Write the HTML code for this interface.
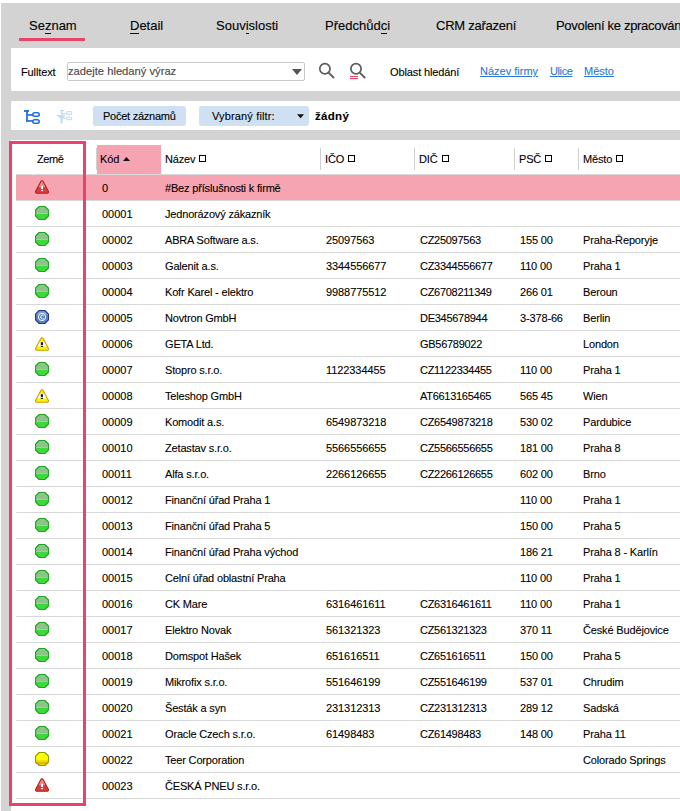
<!DOCTYPE html>
<html><head><meta charset="utf-8">
<style>
*{margin:0;padding:0;box-sizing:border-box}
html,body{width:680px;height:811px;overflow:hidden;background:#fff;font-family:"Liberation Sans",sans-serif;color:#111}
.abs{position:absolute}
#frame{position:absolute;left:1px;top:3px;width:679px;height:808px;background:#d3d3d3}
.tab{position:absolute;top:18px;font-size:13px;line-height:16px;color:#000;white-space:nowrap;-webkit-text-stroke:0.1px #000}
.tab u{text-decoration:none;border-bottom:1px solid #111}
#tabline{position:absolute;left:19px;top:38px;width:66px;height:3px;background:#e8436a}
.panel{position:absolute;left:11px;width:669px;background:#fff}
#p1{top:48px;height:43px}
#p2{top:101px;height:29px}
#p3{top:140px;height:671px}
.t11{font-size:11px;line-height:13px;white-space:nowrap;color:#000;-webkit-text-stroke:0.1px currentColor;letter-spacing:-0.12px}
#inp{position:absolute;left:67px;top:62px;width:238px;height:19px;border:1px solid #c8c8c8;border-radius:2px;background:#fff}
#inp span{position:absolute;left:0px;top:1px;color:#4a4a4a;-webkit-text-stroke:0.15px #4a4a4a;font-size:11.2px;line-height:14px}
.link{color:#2a7ad4;text-decoration:underline;letter-spacing:0}
.btn{position:absolute;top:106px;height:20px;background:#cfe0f3;border-radius:3px}
.hdr{position:absolute;top:145px;height:29px;font-size:11px;line-height:13px;color:#000;-webkit-text-stroke:0.1px #000;letter-spacing:-0.15px;white-space:nowrap}
.hsep{position:absolute;top:148px;width:1px;height:22px;background:#d0d0d0}
.sq{display:inline-block;width:7px;height:7px;border:1px solid #000;margin-left:4px;vertical-align:1px;-webkit-text-stroke:0}
#hline{position:absolute;left:16px;top:174px;width:664px;height:1px;background:#d8d8d8}
.row{position:absolute;left:16px;width:664px;height:25px;font-size:11px;line-height:25px;color:#000;-webkit-text-stroke:0.1px #000}
.row.hl{background:#f6a4b2}
.row .c{position:absolute;top:1px;white-space:nowrap}
.row .ic{position:absolute;left:19px;line-height:0}
.sep{position:absolute;left:16px;width:664px;height:1px;background:#d8d8d8}
#box{position:absolute;left:9px;top:141px;width:77px;height:665px;border:3px solid #e8436a}
</style></head><body>
<div id="frame"></div>
<div class="tab" style="left:29px">Se<u>z</u>nam</div>
<div class="tab" style="left:130px"><u>D</u>etail</div>
<div class="tab" style="left:216px">Souv<u>i</u>slosti</div>
<div class="tab" style="left:325px">Předchůd<u>c</u>i</div>
<div class="tab" style="left:436px;letter-spacing:-0.25px">CRM zařazení</div>
<div class="tab" style="left:556px;letter-spacing:-0.3px">Povolení ke zpracování</div>
<div id="tabline"></div>
<div class="panel" id="p1"></div>
<div class="panel" id="p2"></div>
<div class="panel" id="p3"></div>

<div class="abs t11" style="left:21px;top:66px">Fulltext</div>
<div id="inp"><span>zadejte hledaný výraz</span>
<svg class="abs" style="left:224px;top:6px" width="10" height="6" viewBox="0 0 10 6"><path d="M0,0 L10,0 L5,6 Z" fill="#555"/></svg></div>
<svg class="abs" style="left:314px;top:58px" width="24" height="24" viewBox="0 0 24 24"><circle cx="10.9" cy="10.8" r="5.1" fill="none" stroke="#5c5c5c" stroke-width="1.7"/><path d="M14.6,14.6 L20,20" stroke="#5c5c5c" stroke-width="1.9" stroke-linecap="butt"/></svg>
<svg class="abs" style="left:345px;top:58px" width="24" height="24" viewBox="0 0 24 24"><circle cx="11" cy="10.8" r="5.1" fill="none" stroke="#5c5c5c" stroke-width="1.7"/><path d="M14.7,14.6 L20.1,20" stroke="#5c5c5c" stroke-width="1.9"/><rect x="5" y="18" width="8" height="1.1" fill="#e8436a"/><rect x="5" y="20" width="8" height="1.1" fill="#e8436a"/></svg>
<div class="abs t11" style="left:390px;top:66px">Oblast hledání</div>
<div class="abs t11 link" style="left:480px;top:65px">Název firmy</div>
<div class="abs t11 link" style="left:550px;top:65px;letter-spacing:-0.4px">Ulice</div>
<div class="abs t11 link" style="left:584px;top:65px">Město</div>

<svg class="abs" style="left:20px;top:106px" width="24" height="22" viewBox="0 0 24 22"><g fill="#2272d6"><rect x="4" y="4" width="5" height="1.9"/><rect x="6.1" y="4" width="1.8" height="11.8"/><rect x="7" y="8.1" width="6" height="1.7"/><rect x="6.1" y="14.1" width="7" height="1.7"/></g><rect x="12.8" y="6.8" width="6.4" height="3.4" rx="1.7" fill="none" stroke="#2272d6" stroke-width="1.6"/><rect x="12.8" y="13.8" width="6.4" height="3.4" rx="1.7" fill="none" stroke="#2272d6" stroke-width="1.6"/></svg>
<svg class="abs" style="left:52px;top:106px" width="24" height="22" viewBox="0 0 24 22"><g fill="#c6dcf2"><rect x="8" y="4" width="4" height="1.2"/><rect x="9" y="4" width="1.6" height="5"/><rect x="10" y="7" width="4.5" height="1.2"/><polygon points="4,9 14,9 10.6,12.6 10.6,17.6 8.4,17.6 8.4,12.6"/><rect x="11" y="11.7" width="3.5" height="1.2"/></g><rect x="14.6" y="5.6" width="5.2" height="2.8" rx="1.4" fill="none" stroke="#c6dcf2" stroke-width="1.1"/><rect x="14.6" y="11" width="5.2" height="2.8" rx="1.4" fill="none" stroke="#c6dcf2" stroke-width="1.1"/></svg>
<div class="btn" style="left:93px;width:93px"></div>
<div class="abs t11" style="left:103px;top:110px;letter-spacing:-0.25px">Počet záznamů</div>
<div class="btn" style="left:199px;width:110px"></div>
<div class="abs t11" style="left:212px;top:110px;letter-spacing:0.15px">Vybraný filtr:</div>
<svg class="abs" style="left:297px;top:114px" width="7" height="5" viewBox="0 0 7 5"><path d="M0,0.3 L7,0.3 L3.5,4.3 Z" fill="#111"/></svg>
<div class="abs t11" style="left:315px;top:110px;font-weight:bold;font-size:11.5px;letter-spacing:0.3px;-webkit-text-stroke:0.1px #000">žádný</div>

<div class="hdr" style="left:37px;top:153px;letter-spacing:-0.4px">Země</div>
<div class="hsep" style="left:96px"></div>
<div class="abs" style="left:97px;top:145px;width:64px;height:29px;background:#f6a4b2"></div>
<div class="hdr" style="left:100px;top:153px">Kód<svg width="7" height="4" viewBox="0 0 7 4" style="vertical-align:2px;margin-left:4px"><path d="M0,4 L7,4 L3.5,0 Z" fill="#111"/></svg></div>
<div class="hdr" style="left:165px;top:153px">Název<span class="sq"></span></div>
<div class="hsep" style="left:320px"></div>
<div class="hdr" style="left:325px;top:153px">IČO<span class="sq"></span></div>
<div class="hsep" style="left:414px"></div>
<div class="hdr" style="left:419px;top:153px">DIČ<span class="sq"></span></div>
<div class="hsep" style="left:514px"></div>
<div class="hdr" style="left:519px;top:153px">PSČ<span class="sq"></span></div>
<div class="hsep" style="left:578px"></div>
<div class="hdr" style="left:583px;top:153px">Město<span class="sq"></span></div>
<div id="hline"></div>
<div class="abs" style="left:33px;top:174px;width:1px;height:1px;background:#fff"></div>
<div class="row hl" style="top:175px"><div class="ic" style="top:5px"><svg width="14" height="14" viewBox="0 0 14 14"><defs><clipPath id="rt"><path d="M7,0.8 C7.7,0.8 8.1,1.3 8.4,1.9 L13.3,11.2 C13.8,12.2 13.3,13.2 12.3,13.2 L1.7,13.2 C0.7,13.2 0.2,12.2 0.7,11.2 L5.6,1.9 C5.9,1.3 6.3,0.8 7,0.8 Z"/></clipPath></defs><g clip-path="url(#rt)"><rect x="0" y="0" width="14" height="7" fill="#e98a8a"/><rect x="0" y="7" width="14" height="7" fill="#dc3b3b"/><rect x="0" y="6.5" width="14" height="0.6" fill="#d98aa8"/></g><path d="M7,0.8 C7.7,0.8 8.1,1.3 8.4,1.9 L13.3,11.2 C13.8,12.2 13.3,13.2 12.3,13.2 L1.7,13.2 C0.7,13.2 0.2,12.2 0.7,11.2 L5.6,1.9 C5.9,1.3 6.3,0.8 7,0.8 Z" fill="none" stroke="#b42010" stroke-width="1.1"/><rect x="6" y="5.9" width="2" height="3.1" fill="#fff"/><rect x="6" y="10" width="2" height="1.1" fill="#fff"/></svg></div><span class="c" style="left:86px">0</span><span class="c" style="left:149px;letter-spacing:-0.17px">#Bez příslušnosti k firmě</span><span class="c" style="left:310px;letter-spacing:-0.08px"></span><span class="c" style="left:404px;letter-spacing:-0.28px"></span><span class="c" style="left:504px;letter-spacing:-0.15px"></span><span class="c" style="left:567px;letter-spacing:-0.15px"></span></div><div class="sep" style="top:200px"></div>
<div class="row" style="top:201px"><div class="ic" style="top:5px"><svg width="14" height="14" viewBox="0 0 14 14"><defs><clipPath id="oc"><polygon points="4,0 10,0 14,4 14,10 10,14 4,14 0,10 0,4"/></clipPath></defs><g clip-path="url(#oc)"><rect x="0" y="0" width="14" height="7" fill="#8cc48c"/><rect x="0" y="7" width="14" height="1" fill="#88e860"/><rect x="0" y="8" width="14" height="6" fill="#3cd83c"/></g><polygon points="4.2,0.5 9.8,0.5 13.5,4.2 13.5,9.8 9.8,13.5 4.2,13.5 0.5,9.8 0.5,4.2" fill="none" stroke="#1fa81f" stroke-width="1.2"/></svg></div><span class="c" style="left:86px">00001</span><span class="c" style="left:149px;letter-spacing:-0.17px">Jednorázový zákazník</span><span class="c" style="left:310px;letter-spacing:-0.08px"></span><span class="c" style="left:404px;letter-spacing:-0.28px"></span><span class="c" style="left:504px;letter-spacing:-0.15px"></span><span class="c" style="left:567px;letter-spacing:-0.15px"></span></div><div class="sep" style="top:226px"></div>
<div class="row" style="top:227px"><div class="ic" style="top:5px"><svg width="14" height="14" viewBox="0 0 14 14"><defs><clipPath id="oc"><polygon points="4,0 10,0 14,4 14,10 10,14 4,14 0,10 0,4"/></clipPath></defs><g clip-path="url(#oc)"><rect x="0" y="0" width="14" height="7" fill="#8cc48c"/><rect x="0" y="7" width="14" height="1" fill="#88e860"/><rect x="0" y="8" width="14" height="6" fill="#3cd83c"/></g><polygon points="4.2,0.5 9.8,0.5 13.5,4.2 13.5,9.8 9.8,13.5 4.2,13.5 0.5,9.8 0.5,4.2" fill="none" stroke="#1fa81f" stroke-width="1.2"/></svg></div><span class="c" style="left:86px">00002</span><span class="c" style="left:149px;letter-spacing:-0.17px">ABRA Software a.s.</span><span class="c" style="left:310px;letter-spacing:-0.08px">25097563</span><span class="c" style="left:404px;letter-spacing:-0.28px">CZ25097563</span><span class="c" style="left:504px;letter-spacing:-0.15px">155 00</span><span class="c" style="left:567px;letter-spacing:-0.15px">Praha-Řeporyje</span></div><div class="sep" style="top:252px"></div>
<div class="row" style="top:253px"><div class="ic" style="top:5px"><svg width="14" height="14" viewBox="0 0 14 14"><defs><clipPath id="oc"><polygon points="4,0 10,0 14,4 14,10 10,14 4,14 0,10 0,4"/></clipPath></defs><g clip-path="url(#oc)"><rect x="0" y="0" width="14" height="7" fill="#8cc48c"/><rect x="0" y="7" width="14" height="1" fill="#88e860"/><rect x="0" y="8" width="14" height="6" fill="#3cd83c"/></g><polygon points="4.2,0.5 9.8,0.5 13.5,4.2 13.5,9.8 9.8,13.5 4.2,13.5 0.5,9.8 0.5,4.2" fill="none" stroke="#1fa81f" stroke-width="1.2"/></svg></div><span class="c" style="left:86px">00003</span><span class="c" style="left:149px;letter-spacing:-0.17px">Galenit a.s.</span><span class="c" style="left:310px;letter-spacing:-0.08px">3344556677</span><span class="c" style="left:404px;letter-spacing:-0.28px">CZ3344556677</span><span class="c" style="left:504px;letter-spacing:-0.15px">110 00</span><span class="c" style="left:567px;letter-spacing:-0.15px">Praha 1</span></div><div class="sep" style="top:278px"></div>
<div class="row" style="top:279px"><div class="ic" style="top:5px"><svg width="14" height="14" viewBox="0 0 14 14"><defs><clipPath id="oc"><polygon points="4,0 10,0 14,4 14,10 10,14 4,14 0,10 0,4"/></clipPath></defs><g clip-path="url(#oc)"><rect x="0" y="0" width="14" height="7" fill="#8cc48c"/><rect x="0" y="7" width="14" height="1" fill="#88e860"/><rect x="0" y="8" width="14" height="6" fill="#3cd83c"/></g><polygon points="4.2,0.5 9.8,0.5 13.5,4.2 13.5,9.8 9.8,13.5 4.2,13.5 0.5,9.8 0.5,4.2" fill="none" stroke="#1fa81f" stroke-width="1.2"/></svg></div><span class="c" style="left:86px">00004</span><span class="c" style="left:149px;letter-spacing:-0.17px">Kofr Karel - elektro</span><span class="c" style="left:310px;letter-spacing:-0.08px">9988775512</span><span class="c" style="left:404px;letter-spacing:-0.28px">CZ6708211349</span><span class="c" style="left:504px;letter-spacing:-0.15px">266 01</span><span class="c" style="left:567px;letter-spacing:-0.15px">Beroun</span></div><div class="sep" style="top:304px"></div>
<div class="row" style="top:305px"><div class="ic" style="top:5px"><svg width="14" height="14" viewBox="0 0 14 14"><defs><clipPath id="bo"><polygon points="4,0 10,0 14,4 14,10 10,14 4,14 0,10 0,4"/></clipPath></defs><g clip-path="url(#bo)"><rect x="0" y="0" width="14" height="14" fill="#5b7fc6"/><rect x="0" y="1.5" width="14" height="3" fill="#8aa4d2"/></g><polygon points="4.2,0.5 9.8,0.5 13.5,4.2 13.5,9.8 9.8,13.5 4.2,13.5 0.5,9.8 0.5,4.2" fill="none" stroke="#1e3a8c" stroke-width="1.1"/><circle cx="7" cy="7" r="3.6" fill="#5b7fc6" stroke="#fff" stroke-width="1"/><path d="M8.6,5.7 A1.7,1.8 0 1 0 8.6,8.3" fill="none" stroke="#fff" stroke-width="1"/></svg></div><span class="c" style="left:86px">00005</span><span class="c" style="left:149px;letter-spacing:-0.17px">Novtron GmbH</span><span class="c" style="left:310px;letter-spacing:-0.08px"></span><span class="c" style="left:404px;letter-spacing:-0.28px">DE345678944</span><span class="c" style="left:504px;letter-spacing:-0.15px">3-378-66</span><span class="c" style="left:567px;letter-spacing:-0.15px">Berlin</span></div><div class="sep" style="top:330px"></div>
<div class="row" style="top:331px"><div class="ic" style="top:6px"><svg width="14" height="14" viewBox="0 0 14 14"><defs><clipPath id="yt"><path d="M7,0.8 C7.7,0.8 8.1,1.3 8.4,1.9 L13.3,11.2 C13.8,12.2 13.3,13.2 12.3,13.2 L1.7,13.2 C0.7,13.2 0.2,12.2 0.7,11.2 L5.6,1.9 C5.9,1.3 6.3,0.8 7,0.8 Z"/></clipPath></defs><g clip-path="url(#yt)"><rect x="0" y="0" width="14" height="14" fill="#ffee00"/><rect x="0" y="4.8" width="14" height="4.6" fill="#fffbe8"/></g><path d="M7,0.8 C7.7,0.8 8.1,1.3 8.4,1.9 L13.3,11.2 C13.8,12.2 13.3,13.2 12.3,13.2 L1.7,13.2 C0.7,13.2 0.2,12.2 0.7,11.2 L5.6,1.9 C5.9,1.3 6.3,0.8 7,0.8 Z" fill="none" stroke="#c9a200" stroke-width="1.1"/><rect x="5.8" y="5.2" width="2.2" height="2.8" fill="#1c2038"/><rect x="5.8" y="8.8" width="2.2" height="1.2" fill="#1c2038"/></svg></div><span class="c" style="left:86px">00006</span><span class="c" style="left:149px;letter-spacing:-0.17px">GETA Ltd.</span><span class="c" style="left:310px;letter-spacing:-0.08px"></span><span class="c" style="left:404px;letter-spacing:-0.28px">GB56789022</span><span class="c" style="left:504px;letter-spacing:-0.15px"></span><span class="c" style="left:567px;letter-spacing:-0.15px">London</span></div><div class="sep" style="top:356px"></div>
<div class="row" style="top:357px"><div class="ic" style="top:5px"><svg width="14" height="14" viewBox="0 0 14 14"><defs><clipPath id="oc"><polygon points="4,0 10,0 14,4 14,10 10,14 4,14 0,10 0,4"/></clipPath></defs><g clip-path="url(#oc)"><rect x="0" y="0" width="14" height="7" fill="#8cc48c"/><rect x="0" y="7" width="14" height="1" fill="#88e860"/><rect x="0" y="8" width="14" height="6" fill="#3cd83c"/></g><polygon points="4.2,0.5 9.8,0.5 13.5,4.2 13.5,9.8 9.8,13.5 4.2,13.5 0.5,9.8 0.5,4.2" fill="none" stroke="#1fa81f" stroke-width="1.2"/></svg></div><span class="c" style="left:86px">00007</span><span class="c" style="left:149px;letter-spacing:-0.17px">Stopro s.r.o.</span><span class="c" style="left:310px;letter-spacing:-0.08px">1122334455</span><span class="c" style="left:404px;letter-spacing:-0.28px">CZ1122334455</span><span class="c" style="left:504px;letter-spacing:-0.15px">110 00</span><span class="c" style="left:567px;letter-spacing:-0.15px">Praha 1</span></div><div class="sep" style="top:382px"></div>
<div class="row" style="top:383px"><div class="ic" style="top:6px"><svg width="14" height="14" viewBox="0 0 14 14"><defs><clipPath id="yt"><path d="M7,0.8 C7.7,0.8 8.1,1.3 8.4,1.9 L13.3,11.2 C13.8,12.2 13.3,13.2 12.3,13.2 L1.7,13.2 C0.7,13.2 0.2,12.2 0.7,11.2 L5.6,1.9 C5.9,1.3 6.3,0.8 7,0.8 Z"/></clipPath></defs><g clip-path="url(#yt)"><rect x="0" y="0" width="14" height="14" fill="#ffee00"/><rect x="0" y="4.8" width="14" height="4.6" fill="#fffbe8"/></g><path d="M7,0.8 C7.7,0.8 8.1,1.3 8.4,1.9 L13.3,11.2 C13.8,12.2 13.3,13.2 12.3,13.2 L1.7,13.2 C0.7,13.2 0.2,12.2 0.7,11.2 L5.6,1.9 C5.9,1.3 6.3,0.8 7,0.8 Z" fill="none" stroke="#c9a200" stroke-width="1.1"/><rect x="5.8" y="5.2" width="2.2" height="2.8" fill="#1c2038"/><rect x="5.8" y="8.8" width="2.2" height="1.2" fill="#1c2038"/></svg></div><span class="c" style="left:86px">00008</span><span class="c" style="left:149px;letter-spacing:-0.17px">Teleshop GmbH</span><span class="c" style="left:310px;letter-spacing:-0.08px"></span><span class="c" style="left:404px;letter-spacing:-0.28px">AT6613165465</span><span class="c" style="left:504px;letter-spacing:-0.15px">565 45</span><span class="c" style="left:567px;letter-spacing:-0.15px">Wien</span></div><div class="sep" style="top:408px"></div>
<div class="row" style="top:409px"><div class="ic" style="top:5px"><svg width="14" height="14" viewBox="0 0 14 14"><defs><clipPath id="oc"><polygon points="4,0 10,0 14,4 14,10 10,14 4,14 0,10 0,4"/></clipPath></defs><g clip-path="url(#oc)"><rect x="0" y="0" width="14" height="7" fill="#8cc48c"/><rect x="0" y="7" width="14" height="1" fill="#88e860"/><rect x="0" y="8" width="14" height="6" fill="#3cd83c"/></g><polygon points="4.2,0.5 9.8,0.5 13.5,4.2 13.5,9.8 9.8,13.5 4.2,13.5 0.5,9.8 0.5,4.2" fill="none" stroke="#1fa81f" stroke-width="1.2"/></svg></div><span class="c" style="left:86px">00009</span><span class="c" style="left:149px;letter-spacing:-0.17px">Komodit a.s.</span><span class="c" style="left:310px;letter-spacing:-0.08px">6549873218</span><span class="c" style="left:404px;letter-spacing:-0.28px">CZ6549873218</span><span class="c" style="left:504px;letter-spacing:-0.15px">530 02</span><span class="c" style="left:567px;letter-spacing:-0.15px">Pardubice</span></div><div class="sep" style="top:434px"></div>
<div class="row" style="top:435px"><div class="ic" style="top:5px"><svg width="14" height="14" viewBox="0 0 14 14"><defs><clipPath id="oc"><polygon points="4,0 10,0 14,4 14,10 10,14 4,14 0,10 0,4"/></clipPath></defs><g clip-path="url(#oc)"><rect x="0" y="0" width="14" height="7" fill="#8cc48c"/><rect x="0" y="7" width="14" height="1" fill="#88e860"/><rect x="0" y="8" width="14" height="6" fill="#3cd83c"/></g><polygon points="4.2,0.5 9.8,0.5 13.5,4.2 13.5,9.8 9.8,13.5 4.2,13.5 0.5,9.8 0.5,4.2" fill="none" stroke="#1fa81f" stroke-width="1.2"/></svg></div><span class="c" style="left:86px">00010</span><span class="c" style="left:149px;letter-spacing:-0.17px">Zetastav s.r.o.</span><span class="c" style="left:310px;letter-spacing:-0.08px">5566556655</span><span class="c" style="left:404px;letter-spacing:-0.28px">CZ5566556655</span><span class="c" style="left:504px;letter-spacing:-0.15px">181 00</span><span class="c" style="left:567px;letter-spacing:-0.15px">Praha 8</span></div><div class="sep" style="top:460px"></div>
<div class="row" style="top:461px"><div class="ic" style="top:5px"><svg width="14" height="14" viewBox="0 0 14 14"><defs><clipPath id="oc"><polygon points="4,0 10,0 14,4 14,10 10,14 4,14 0,10 0,4"/></clipPath></defs><g clip-path="url(#oc)"><rect x="0" y="0" width="14" height="7" fill="#8cc48c"/><rect x="0" y="7" width="14" height="1" fill="#88e860"/><rect x="0" y="8" width="14" height="6" fill="#3cd83c"/></g><polygon points="4.2,0.5 9.8,0.5 13.5,4.2 13.5,9.8 9.8,13.5 4.2,13.5 0.5,9.8 0.5,4.2" fill="none" stroke="#1fa81f" stroke-width="1.2"/></svg></div><span class="c" style="left:86px">00011</span><span class="c" style="left:149px;letter-spacing:-0.17px">Alfa s.r.o.</span><span class="c" style="left:310px;letter-spacing:-0.08px">2266126655</span><span class="c" style="left:404px;letter-spacing:-0.28px">CZ2266126655</span><span class="c" style="left:504px;letter-spacing:-0.15px">602 00</span><span class="c" style="left:567px;letter-spacing:-0.15px">Brno</span></div><div class="sep" style="top:486px"></div>
<div class="row" style="top:487px"><div class="ic" style="top:5px"><svg width="14" height="14" viewBox="0 0 14 14"><defs><clipPath id="oc"><polygon points="4,0 10,0 14,4 14,10 10,14 4,14 0,10 0,4"/></clipPath></defs><g clip-path="url(#oc)"><rect x="0" y="0" width="14" height="7" fill="#8cc48c"/><rect x="0" y="7" width="14" height="1" fill="#88e860"/><rect x="0" y="8" width="14" height="6" fill="#3cd83c"/></g><polygon points="4.2,0.5 9.8,0.5 13.5,4.2 13.5,9.8 9.8,13.5 4.2,13.5 0.5,9.8 0.5,4.2" fill="none" stroke="#1fa81f" stroke-width="1.2"/></svg></div><span class="c" style="left:86px">00012</span><span class="c" style="left:149px;letter-spacing:-0.17px">Finanční úřad Praha 1</span><span class="c" style="left:310px;letter-spacing:-0.08px"></span><span class="c" style="left:404px;letter-spacing:-0.28px"></span><span class="c" style="left:504px;letter-spacing:-0.15px">110 00</span><span class="c" style="left:567px;letter-spacing:-0.15px">Praha 1</span></div><div class="sep" style="top:512px"></div>
<div class="row" style="top:513px"><div class="ic" style="top:5px"><svg width="14" height="14" viewBox="0 0 14 14"><defs><clipPath id="oc"><polygon points="4,0 10,0 14,4 14,10 10,14 4,14 0,10 0,4"/></clipPath></defs><g clip-path="url(#oc)"><rect x="0" y="0" width="14" height="7" fill="#8cc48c"/><rect x="0" y="7" width="14" height="1" fill="#88e860"/><rect x="0" y="8" width="14" height="6" fill="#3cd83c"/></g><polygon points="4.2,0.5 9.8,0.5 13.5,4.2 13.5,9.8 9.8,13.5 4.2,13.5 0.5,9.8 0.5,4.2" fill="none" stroke="#1fa81f" stroke-width="1.2"/></svg></div><span class="c" style="left:86px">00013</span><span class="c" style="left:149px;letter-spacing:-0.17px">Finanční úřad Praha 5</span><span class="c" style="left:310px;letter-spacing:-0.08px"></span><span class="c" style="left:404px;letter-spacing:-0.28px"></span><span class="c" style="left:504px;letter-spacing:-0.15px">150 00</span><span class="c" style="left:567px;letter-spacing:-0.15px">Praha 5</span></div><div class="sep" style="top:538px"></div>
<div class="row" style="top:539px"><div class="ic" style="top:5px"><svg width="14" height="14" viewBox="0 0 14 14"><defs><clipPath id="oc"><polygon points="4,0 10,0 14,4 14,10 10,14 4,14 0,10 0,4"/></clipPath></defs><g clip-path="url(#oc)"><rect x="0" y="0" width="14" height="7" fill="#8cc48c"/><rect x="0" y="7" width="14" height="1" fill="#88e860"/><rect x="0" y="8" width="14" height="6" fill="#3cd83c"/></g><polygon points="4.2,0.5 9.8,0.5 13.5,4.2 13.5,9.8 9.8,13.5 4.2,13.5 0.5,9.8 0.5,4.2" fill="none" stroke="#1fa81f" stroke-width="1.2"/></svg></div><span class="c" style="left:86px">00014</span><span class="c" style="left:149px;letter-spacing:-0.17px">Finanční úřad Praha východ</span><span class="c" style="left:310px;letter-spacing:-0.08px"></span><span class="c" style="left:404px;letter-spacing:-0.28px"></span><span class="c" style="left:504px;letter-spacing:-0.15px">186 21</span><span class="c" style="left:567px;letter-spacing:-0.15px">Praha 8 - Karlín</span></div><div class="sep" style="top:564px"></div>
<div class="row" style="top:565px"><div class="ic" style="top:5px"><svg width="14" height="14" viewBox="0 0 14 14"><defs><clipPath id="oc"><polygon points="4,0 10,0 14,4 14,10 10,14 4,14 0,10 0,4"/></clipPath></defs><g clip-path="url(#oc)"><rect x="0" y="0" width="14" height="7" fill="#8cc48c"/><rect x="0" y="7" width="14" height="1" fill="#88e860"/><rect x="0" y="8" width="14" height="6" fill="#3cd83c"/></g><polygon points="4.2,0.5 9.8,0.5 13.5,4.2 13.5,9.8 9.8,13.5 4.2,13.5 0.5,9.8 0.5,4.2" fill="none" stroke="#1fa81f" stroke-width="1.2"/></svg></div><span class="c" style="left:86px">00015</span><span class="c" style="left:149px;letter-spacing:-0.17px">Celní úřad oblastní Praha</span><span class="c" style="left:310px;letter-spacing:-0.08px"></span><span class="c" style="left:404px;letter-spacing:-0.28px"></span><span class="c" style="left:504px;letter-spacing:-0.15px">110 00</span><span class="c" style="left:567px;letter-spacing:-0.15px">Praha 1</span></div><div class="sep" style="top:590px"></div>
<div class="row" style="top:591px"><div class="ic" style="top:5px"><svg width="14" height="14" viewBox="0 0 14 14"><defs><clipPath id="oc"><polygon points="4,0 10,0 14,4 14,10 10,14 4,14 0,10 0,4"/></clipPath></defs><g clip-path="url(#oc)"><rect x="0" y="0" width="14" height="7" fill="#8cc48c"/><rect x="0" y="7" width="14" height="1" fill="#88e860"/><rect x="0" y="8" width="14" height="6" fill="#3cd83c"/></g><polygon points="4.2,0.5 9.8,0.5 13.5,4.2 13.5,9.8 9.8,13.5 4.2,13.5 0.5,9.8 0.5,4.2" fill="none" stroke="#1fa81f" stroke-width="1.2"/></svg></div><span class="c" style="left:86px">00016</span><span class="c" style="left:149px;letter-spacing:-0.17px">CK Mare</span><span class="c" style="left:310px;letter-spacing:-0.08px">6316461611</span><span class="c" style="left:404px;letter-spacing:-0.28px">CZ6316461611</span><span class="c" style="left:504px;letter-spacing:-0.15px">110 00</span><span class="c" style="left:567px;letter-spacing:-0.15px">Praha 1</span></div><div class="sep" style="top:616px"></div>
<div class="row" style="top:617px"><div class="ic" style="top:5px"><svg width="14" height="14" viewBox="0 0 14 14"><defs><clipPath id="oc"><polygon points="4,0 10,0 14,4 14,10 10,14 4,14 0,10 0,4"/></clipPath></defs><g clip-path="url(#oc)"><rect x="0" y="0" width="14" height="7" fill="#8cc48c"/><rect x="0" y="7" width="14" height="1" fill="#88e860"/><rect x="0" y="8" width="14" height="6" fill="#3cd83c"/></g><polygon points="4.2,0.5 9.8,0.5 13.5,4.2 13.5,9.8 9.8,13.5 4.2,13.5 0.5,9.8 0.5,4.2" fill="none" stroke="#1fa81f" stroke-width="1.2"/></svg></div><span class="c" style="left:86px">00017</span><span class="c" style="left:149px;letter-spacing:-0.17px">Elektro Novak</span><span class="c" style="left:310px;letter-spacing:-0.08px">561321323</span><span class="c" style="left:404px;letter-spacing:-0.28px">CZ561321323</span><span class="c" style="left:504px;letter-spacing:-0.15px">370 11</span><span class="c" style="left:567px;letter-spacing:-0.15px">České Budějovice</span></div><div class="sep" style="top:642px"></div>
<div class="row" style="top:643px"><div class="ic" style="top:5px"><svg width="14" height="14" viewBox="0 0 14 14"><defs><clipPath id="oc"><polygon points="4,0 10,0 14,4 14,10 10,14 4,14 0,10 0,4"/></clipPath></defs><g clip-path="url(#oc)"><rect x="0" y="0" width="14" height="7" fill="#8cc48c"/><rect x="0" y="7" width="14" height="1" fill="#88e860"/><rect x="0" y="8" width="14" height="6" fill="#3cd83c"/></g><polygon points="4.2,0.5 9.8,0.5 13.5,4.2 13.5,9.8 9.8,13.5 4.2,13.5 0.5,9.8 0.5,4.2" fill="none" stroke="#1fa81f" stroke-width="1.2"/></svg></div><span class="c" style="left:86px">00018</span><span class="c" style="left:149px;letter-spacing:-0.17px">Domspot Hašek</span><span class="c" style="left:310px;letter-spacing:-0.08px">651616511</span><span class="c" style="left:404px;letter-spacing:-0.28px">CZ651616511</span><span class="c" style="left:504px;letter-spacing:-0.15px">150 00</span><span class="c" style="left:567px;letter-spacing:-0.15px">Praha 5</span></div><div class="sep" style="top:668px"></div>
<div class="row" style="top:669px"><div class="ic" style="top:5px"><svg width="14" height="14" viewBox="0 0 14 14"><defs><clipPath id="oc"><polygon points="4,0 10,0 14,4 14,10 10,14 4,14 0,10 0,4"/></clipPath></defs><g clip-path="url(#oc)"><rect x="0" y="0" width="14" height="7" fill="#8cc48c"/><rect x="0" y="7" width="14" height="1" fill="#88e860"/><rect x="0" y="8" width="14" height="6" fill="#3cd83c"/></g><polygon points="4.2,0.5 9.8,0.5 13.5,4.2 13.5,9.8 9.8,13.5 4.2,13.5 0.5,9.8 0.5,4.2" fill="none" stroke="#1fa81f" stroke-width="1.2"/></svg></div><span class="c" style="left:86px">00019</span><span class="c" style="left:149px;letter-spacing:-0.17px">Mikrofix s.r.o.</span><span class="c" style="left:310px;letter-spacing:-0.08px">551646199</span><span class="c" style="left:404px;letter-spacing:-0.28px">CZ551646199</span><span class="c" style="left:504px;letter-spacing:-0.15px">537 01</span><span class="c" style="left:567px;letter-spacing:-0.15px">Chrudim</span></div><div class="sep" style="top:694px"></div>
<div class="row" style="top:695px"><div class="ic" style="top:5px"><svg width="14" height="14" viewBox="0 0 14 14"><defs><clipPath id="oc"><polygon points="4,0 10,0 14,4 14,10 10,14 4,14 0,10 0,4"/></clipPath></defs><g clip-path="url(#oc)"><rect x="0" y="0" width="14" height="7" fill="#8cc48c"/><rect x="0" y="7" width="14" height="1" fill="#88e860"/><rect x="0" y="8" width="14" height="6" fill="#3cd83c"/></g><polygon points="4.2,0.5 9.8,0.5 13.5,4.2 13.5,9.8 9.8,13.5 4.2,13.5 0.5,9.8 0.5,4.2" fill="none" stroke="#1fa81f" stroke-width="1.2"/></svg></div><span class="c" style="left:86px">00020</span><span class="c" style="left:149px;letter-spacing:-0.17px">Šesták a syn</span><span class="c" style="left:310px;letter-spacing:-0.08px">231312313</span><span class="c" style="left:404px;letter-spacing:-0.28px">CZ231312313</span><span class="c" style="left:504px;letter-spacing:-0.15px">289 12</span><span class="c" style="left:567px;letter-spacing:-0.15px">Sadská</span></div><div class="sep" style="top:720px"></div>
<div class="row" style="top:721px"><div class="ic" style="top:5px"><svg width="14" height="14" viewBox="0 0 14 14"><defs><clipPath id="oc"><polygon points="4,0 10,0 14,4 14,10 10,14 4,14 0,10 0,4"/></clipPath></defs><g clip-path="url(#oc)"><rect x="0" y="0" width="14" height="7" fill="#8cc48c"/><rect x="0" y="7" width="14" height="1" fill="#88e860"/><rect x="0" y="8" width="14" height="6" fill="#3cd83c"/></g><polygon points="4.2,0.5 9.8,0.5 13.5,4.2 13.5,9.8 9.8,13.5 4.2,13.5 0.5,9.8 0.5,4.2" fill="none" stroke="#1fa81f" stroke-width="1.2"/></svg></div><span class="c" style="left:86px">00021</span><span class="c" style="left:149px;letter-spacing:-0.17px">Oracle Czech s.r.o.</span><span class="c" style="left:310px;letter-spacing:-0.08px">61498483</span><span class="c" style="left:404px;letter-spacing:-0.28px">CZ61498483</span><span class="c" style="left:504px;letter-spacing:-0.15px">148 00</span><span class="c" style="left:567px;letter-spacing:-0.15px">Praha 11</span></div><div class="sep" style="top:746px"></div>
<div class="row" style="top:747px"><div class="ic" style="top:5px"><svg width="14" height="14" viewBox="0 0 14 14"><defs><clipPath id="oy"><polygon points="4,0 10,0 14,4 14,10 10,14 4,14 0,10 0,4"/></clipPath></defs><g clip-path="url(#oy)"><rect x="0" y="0" width="14" height="8" fill="#ffff00"/><rect x="0" y="8" width="14" height="1.5" fill="#e8e400"/><rect x="0" y="9.5" width="14" height="2.5" fill="#e6b800"/><rect x="0" y="12" width="14" height="2" fill="#ecd800"/></g><polygon points="4.2,0.5 9.8,0.5 13.5,4.2 13.5,9.8 9.8,13.5 4.2,13.5 0.5,9.8 0.5,4.2" fill="none" stroke="#8aa000" stroke-width="1.2"/></svg></div><span class="c" style="left:86px">00022</span><span class="c" style="left:149px;letter-spacing:-0.17px">Teer Corporation</span><span class="c" style="left:310px;letter-spacing:-0.08px"></span><span class="c" style="left:404px;letter-spacing:-0.28px"></span><span class="c" style="left:504px;letter-spacing:-0.15px"></span><span class="c" style="left:567px;letter-spacing:-0.15px">Colorado Springs</span></div><div class="sep" style="top:772px"></div>
<div class="row" style="top:773px"><div class="ic" style="top:5px"><svg width="14" height="14" viewBox="0 0 14 14"><defs><clipPath id="rt"><path d="M7,0.8 C7.7,0.8 8.1,1.3 8.4,1.9 L13.3,11.2 C13.8,12.2 13.3,13.2 12.3,13.2 L1.7,13.2 C0.7,13.2 0.2,12.2 0.7,11.2 L5.6,1.9 C5.9,1.3 6.3,0.8 7,0.8 Z"/></clipPath></defs><g clip-path="url(#rt)"><rect x="0" y="0" width="14" height="7" fill="#e98a8a"/><rect x="0" y="7" width="14" height="7" fill="#dc3b3b"/><rect x="0" y="6.5" width="14" height="0.6" fill="#d98aa8"/></g><path d="M7,0.8 C7.7,0.8 8.1,1.3 8.4,1.9 L13.3,11.2 C13.8,12.2 13.3,13.2 12.3,13.2 L1.7,13.2 C0.7,13.2 0.2,12.2 0.7,11.2 L5.6,1.9 C5.9,1.3 6.3,0.8 7,0.8 Z" fill="none" stroke="#b42010" stroke-width="1.1"/><rect x="6" y="5.9" width="2" height="3.1" fill="#fff"/><rect x="6" y="10" width="2" height="1.1" fill="#fff"/></svg></div><span class="c" style="left:86px">00023</span><span class="c" style="left:149px;letter-spacing:-0.17px">ČESKÁ PNEU s.r.o.</span><span class="c" style="left:310px;letter-spacing:-0.08px"></span><span class="c" style="left:404px;letter-spacing:-0.28px"></span><span class="c" style="left:504px;letter-spacing:-0.15px"></span><span class="c" style="left:567px;letter-spacing:-0.15px"></span></div><div class="sep" style="top:798px"></div>
<div id="box"></div>
</body></html>
